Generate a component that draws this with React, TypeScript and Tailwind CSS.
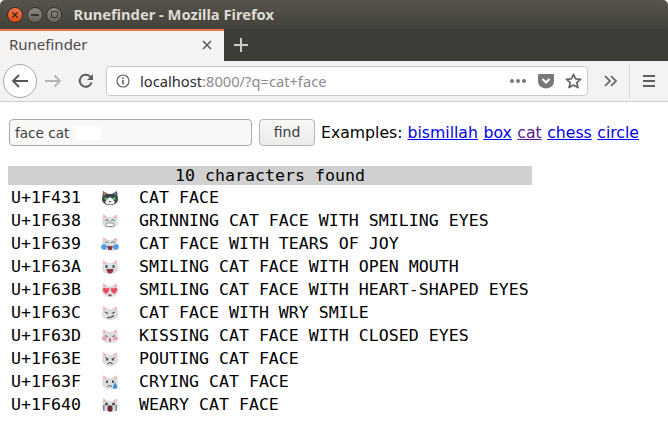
import { ReactNode } from "react";

type Mood = "plain" | "grin" | "joy" | "smile" | "hearts" | "wry" | "kiss" | "pout" | "cry" | "weary";

const ROWS: { code: string; mood: Mood; name: string }[] = [
  { code: "U+1F431", mood: "plain", name: "CAT FACE" },
  { code: "U+1F638", mood: "grin", name: "GRINNING CAT FACE WITH SMILING EYES" },
  { code: "U+1F639", mood: "joy", name: "CAT FACE WITH TEARS OF JOY" },
  { code: "U+1F63A", mood: "smile", name: "SMILING CAT FACE WITH OPEN MOUTH" },
  { code: "U+1F63B", mood: "hearts", name: "SMILING CAT FACE WITH HEART-SHAPED EYES" },
  { code: "U+1F63C", mood: "wry", name: "CAT FACE WITH WRY SMILE" },
  { code: "U+1F63D", mood: "kiss", name: "KISSING CAT FACE WITH CLOSED EYES" },
  { code: "U+1F63E", mood: "pout", name: "POUTING CAT FACE" },
  { code: "U+1F63F", mood: "cry", name: "CRYING CAT FACE" },
  { code: "U+1F640", mood: "weary", name: "WEARY CAT FACE" },
];

const EXAMPLES = ["bismillah", "box", "cat", "chess", "circle"];

function CatHead({ dark, children }: { dark?: boolean; children: ReactNode }) {
  const fur = dark ? "#3d4248" : "#dcdee1";
  return (
    <svg width="18" height="16" viewBox="0 0 18 16" className="block">
      <path d="M2 1 L7 4 H11 L16 1 L17 10 Q16 15 9 15 Q2 15 1 10 Z" fill={fur} />
      <path d="M2.3 1.6 L5.5 3.8 L2.6 6 Z" fill={dark ? "#c98a4a" : "#f4b4ba"} />
      <path d="M15.7 1.6 L12.5 3.8 L15.4 6 Z" fill={dark ? "#5f7f9f" : "#f4b4ba"} />
      {children}
    </svg>
  );
}

function CatFace({ mood }: { mood: Mood }) {
  if (mood === "plain") {
    return (
      <CatHead dark>
        <path d="M9 7 Q13 9 14 13 Q9 16 4 13 Q5 9 9 7 Z" fill="#eef0f0" />
        <rect x="3.5" y="7.5" width="2.5" height="2.2" fill="#5ec56a" />
        <rect x="12" y="7.5" width="2.5" height="2.2" fill="#5ec56a" />
        <rect x="8" y="11" width="2" height="1.2" fill="#555" />
      </CatHead>
    );
  }
  if (mood === "grin") {
    return (
      <CatHead>
        <path d="M4 8 L6 6.5 L8 8 M10 8 L12 6.5 L14 8" stroke="#6a6f76" fill="none" />
        <rect x="5" y="10" width="8" height="3.5" rx="1.5" fill="#fff" stroke="#666" strokeWidth="0.7" />
      </CatHead>
    );
  }
  if (mood === "joy") {
    return (
      <CatHead>
        <path d="M4 7 L6 5.5 L8 7 M10 7 L12 5.5 L14 7" stroke="#6a6f76" fill="none" />
        <path d="M6 10 H12 L10.5 14 H7.5 Z" fill="#8a3a40" />
        <circle cx="3" cy="11" r="2.8" fill="#4a9be8" />
        <circle cx="15" cy="11" r="2.8" fill="#4a9be8" />
      </CatHead>
    );
  }
  if (mood === "smile") {
    return (
      <CatHead>
        <rect x="4.5" y="6" width="2" height="3" fill="#555" />
        <rect x="11.5" y="6" width="2" height="3" fill="#555" />
        <path d="M5.5 10 H12.5 Q12 14.5 9 14.5 Q6 14.5 5.5 10 Z" fill="#8a3a40" />
      </CatHead>
    );
  }
  if (mood === "hearts") {
    return (
      <CatHead>
        <path d="M1.5 7 Q4 4.5 5.5 7 Q7 4.5 8.5 7 Q8 10 5 12 Q2 10 1.5 7 Z" fill="#ee4a5c" />
        <path d="M9.5 7 Q11 4.5 12.5 7 Q14 4.5 16.5 7 Q16 10 13 12 Q10 10 9.5 7 Z" fill="#ee4a5c" />
        <path d="M7 12.5 H11 Q10.5 14.5 9 14.5 Q7.5 14.5 7 12.5 Z" fill="#8a3a40" />
      </CatHead>
    );
  }
  if (mood === "wry") {
    return (
      <CatHead>
        <path d="M4 7 L7 8.5 M14 7 L11 8.5" stroke="#555" strokeWidth="1.2" />
        <path d="M6 12.5 Q10 13 13 10.5" stroke="#555" strokeWidth="1.2" fill="none" />
      </CatHead>
    );
  }
  if (mood === "kiss") {
    return (
      <CatHead>
        <path d="M4 7 L6.5 8.5 L4 9 M14 7 L11.5 8.5 L14 9" stroke="#666" fill="none" strokeWidth="0.8" />
        <ellipse cx="3.5" cy="10.5" rx="2.5" ry="2" fill="#f4a0a8" />
        <ellipse cx="14.5" cy="10.5" rx="2.5" ry="2" fill="#f4a0a8" />
        <path d="M8 10.5 L10 11.5 L8 12.5 L10 13.5" stroke="#8a3a40" fill="none" />
      </CatHead>
    );
  }
  if (mood === "pout") {
    return (
      <CatHead>
        <path d="M4 6.5 L7.5 8 M14 6.5 L10.5 8" stroke="#555" />
        <rect x="5" y="8" width="2" height="1.5" fill="#555" />
        <rect x="11" y="8" width="2" height="1.5" fill="#555" />
        <path d="M6.5 13 Q9 10.5 11.5 13" stroke="#555" fill="none" strokeWidth="1.1" />
      </CatHead>
    );
  }
  if (mood === "cry") {
    return (
      <CatHead>
        <rect x="5" y="6.5" width="2" height="2.5" fill="#555" />
        <rect x="11" y="6.5" width="2" height="2.5" fill="#555" />
        <path d="M6.5 12.5 Q9 10.5 11 12.5" stroke="#555" fill="none" />
        <path d="M14 8.5 Q17 12 16 14 Q14 16 12 14 Q11.5 12 14 8.5 Z" fill="#3f8fe0" />
      </CatHead>
    );
  }
  return (
    <CatHead>
      <circle cx="5.5" cy="7" r="1.6" fill="#555" />
      <circle cx="12.5" cy="7" r="1.6" fill="#555" />
      <ellipse cx="9" cy="11.5" rx="2.6" ry="3.2" fill="#6b2b30" />
      <rect x="2" y="8" width="1.6" height="6" fill="#7d8a98" />
      <rect x="14.4" y="8" width="1.6" height="6" fill="#7d8a98" />
    </CatHead>
  );
}

function WindowButton({ children, close }: { children: ReactNode; close?: boolean }) {
  return (
    <div
      className={`flex h-[16px] w-[16px] items-center justify-center rounded-full border ${
        close ? "border-[#3c2a20] bg-gradient-to-b from-[#f2774a] to-[#dd4814]" : "border-[#35342f] bg-gradient-to-b from-[#8a8880] to-[#66645d]"
      }`}
    >
      {children}
    </div>
  );
}

function TitleBar() {
  return (
    <div className="flex h-[29px] items-center gap-[3.5px] rounded-t-[5px] bg-gradient-to-b from-[#57544c] to-[#42413b] pl-[7px]">
      <WindowButton close>
        <svg width="8" height="8" viewBox="0 0 9 9">
          <path d="M1.5 1.5 L7.5 7.5 M7.5 1.5 L1.5 7.5" stroke="#41281e" strokeWidth="1.5" />
        </svg>
      </WindowButton>
      <WindowButton>
        <div className="h-[2px] w-[8px] bg-[#36352f]" />
      </WindowButton>
      <WindowButton>
        <div className="h-[7px] w-[7px] rounded-[1px] border border-[#36352f]" />
      </WindowButton>
      <span className="ml-[8px] font-['Noto_Sans',sans-serif] text-[14.7px] leading-none font-bold text-[#dfdbd2]">
        Runefinder - Mozilla Firefox
      </span>
    </div>
  );
}

function TabStrip() {
  return (
    <div className="flex h-[32px] bg-[#3e3d38]">
      <div className="flex w-[224px] items-center justify-between border-t-2 border-[#f0764a] bg-[#f4f3f1] pr-[12px] pb-[3px] pl-[9px] font-['Noto_Sans',sans-serif] text-[15px] text-[#4a4a4c]">
        <span>Runefinder</span>
        <svg width="10" height="10" viewBox="0 0 10 10">
          <path d="M1 1 L9 9 M9 1 L1 9" stroke="#57575a" strokeWidth="1.5" />
        </svg>
      </div>
      <div className="ml-[10px] flex items-center">
        <svg width="14" height="14" viewBox="0 0 14 14">
          <path d="M7 0 V14 M0 7 H14" stroke="#cfccc5" strokeWidth="2" />
        </svg>
      </div>
    </div>
  );
}

function Toolbar() {
  return (
    <div className="flex h-[41px] items-center border-b border-[#cfcecb] bg-[#f4f3f1] pl-[3px]">
      <div className="flex h-[34px] w-[34px] items-center justify-center rounded-full border border-[#aaa9a6] bg-white">
        <svg width="18" height="16" viewBox="0 0 18 16">
          <path d="M17 8 H2 M8 2 L2 8 L8 14" stroke="#55555a" strokeWidth="1.8" fill="none" />
        </svg>
      </div>
      <svg width="17" height="14" viewBox="0 0 17 14" className="ml-[8px]">
        <path d="M0 7 H15 M9.5 1.5 L15 7 L9.5 12.5" stroke="#b4b4b4" strokeWidth="1.8" fill="none" />
      </svg>
      <svg width="16" height="16" viewBox="0 0 16 16" className="ml-[16px]">
        <path d="M13.5 9.5 A6 6 0 1 1 12 3.5 L14 5.5" stroke="#5c5c60" strokeWidth="2" fill="none" />
        <path d="M15 1 V7 H9 Z" fill="#5c5c60" />
      </svg>
      <div className="ml-[12px] flex h-[30px] w-[482px] items-center rounded-[4px] border border-[#cbcac7] bg-white pr-[5px] pl-[9px]">
        <svg width="14" height="14" viewBox="0 0 14 14">
          <circle cx="7" cy="7" r="6" stroke="#606064" strokeWidth="1.2" fill="none" />
          <rect x="6.2" y="6" width="1.6" height="4.5" fill="#606064" />
          <rect x="6.2" y="3.4" width="1.6" height="1.6" fill="#606064" />
        </svg>
        <span className="ml-[10px] font-['Noto_Sans',sans-serif] text-[14.7px] text-[#2b2b30]">
          localhost<span className="text-[#8a8a8e]">:8000/?q=cat+face</span>
        </span>
        <div className="ml-auto flex items-center">
          <div className="flex gap-[2px]">
            <div className="h-[4px] w-[4px] rounded-full bg-[#77777a]" />
            <div className="h-[4px] w-[4px] rounded-full bg-[#77777a]" />
            <div className="h-[4px] w-[4px] rounded-full bg-[#77777a]" />
          </div>
          <svg width="16" height="15" viewBox="0 0 16 15" className="ml-[12px]">
            <path d="M1 0 H15 Q16 0 16 1 V7 Q16 14 8 14.5 Q0 14 0 7 V1 Q0 0 1 0 Z" fill="#77777a" />
            <path d="M4.5 5 L8 8.5 L11.5 5" stroke="#fff" strokeWidth="2" fill="none" />
          </svg>
          <svg width="17" height="16" viewBox="0 0 17 16" className="ml-[11px]">
            <path d="M8.5 1.3 L10.6 5.9 L15.6 6.4 L11.8 9.7 L13 14.6 L8.5 12 L4 14.6 L5.2 9.7 L1.4 6.4 L6.4 5.9 Z" stroke="#66666a" strokeWidth="1.7" fill="none" strokeLinejoin="round" />
          </svg>
        </div>
      </div>
      <svg width="14" height="12" viewBox="0 0 14 12" className="ml-[16px]">
        <path d="M1 1 L6 6 L1 11 M7 1 L12 6 L7 11" stroke="#5f5f63" strokeWidth="1.7" fill="none" />
      </svg>
      <div className="ml-[11px] h-[34px] w-px bg-[#d8d7d4]" />
      <div className="ml-[13px] flex w-[12px] flex-col gap-[3px]">
        <div className="h-[2px] bg-[#5f5f63]" />
        <div className="h-[2px] bg-[#5f5f63]" />
        <div className="h-[2px] bg-[#5f5f63]" />
      </div>
    </div>
  );
}

function SearchForm() {
  return (
    <div className="flex items-center pt-[17px] pl-[9px] font-['DejaVu_Sans',sans-serif] text-[15.7px] text-black">
      <div className="relative">
        <input
          readOnly
          value="face cat"
          className="block h-[27px] w-[243px] rounded-[4px] border border-[#a9a9a6] bg-[#f8f8f7] px-[5px] text-[13.6px] text-[#3c3c3c] outline-none"
        />
        <div className="absolute top-[7px] left-[67px] h-[14px] w-[25px] bg-white" />
      </div>
      <button className="ml-[7px] h-[27px] w-[56px] rounded-[4px] border border-[#b5b5b2] bg-gradient-to-b from-[#f8f8f7] to-[#ecebe9] text-[14px] text-[#3c3c3c]">
        find
      </button>
      <span className="ml-[6px] whitespace-pre">Examples: </span>
      <div className="flex gap-[5.5px]">
        {EXAMPLES.map((word) => (
          <a key={word} href="#" className={`underline ${word === "cat" ? "text-[#551a8b]" : "text-[#0000ee]"}`}>
            {word}
          </a>
        ))}
      </div>
    </div>
  );
}

function Results() {
  return (
    <div className="mt-[20px] ml-[8px] w-[524px] font-['DejaVu_Sans_Mono',monospace] text-[16.6px] text-black">
      <div className="flex h-[19px] items-center justify-center bg-[#d0d0d0] pt-[2px] leading-none">10 characters found</div>
      <div className="pt-[1px]">
        {ROWS.map((row) => (
          <div key={row.code} className="flex h-[23px] items-center pl-[3px] whitespace-pre">
            <span className="w-[90px] pt-[2px]">{row.code}</span>
            <span className="w-[38px]">
              <CatFace mood={row.mood} />
            </span>
            <span className="pt-[2px]">{row.name}</span>
          </div>
        ))}
      </div>
    </div>
  );
}

export default function App() {
  return (
    <div className="h-[424px] w-[668px] overflow-hidden bg-white">
      <TitleBar />
      <TabStrip />
      <Toolbar />
      <SearchForm />
      <Results />
    </div>
  );
}
